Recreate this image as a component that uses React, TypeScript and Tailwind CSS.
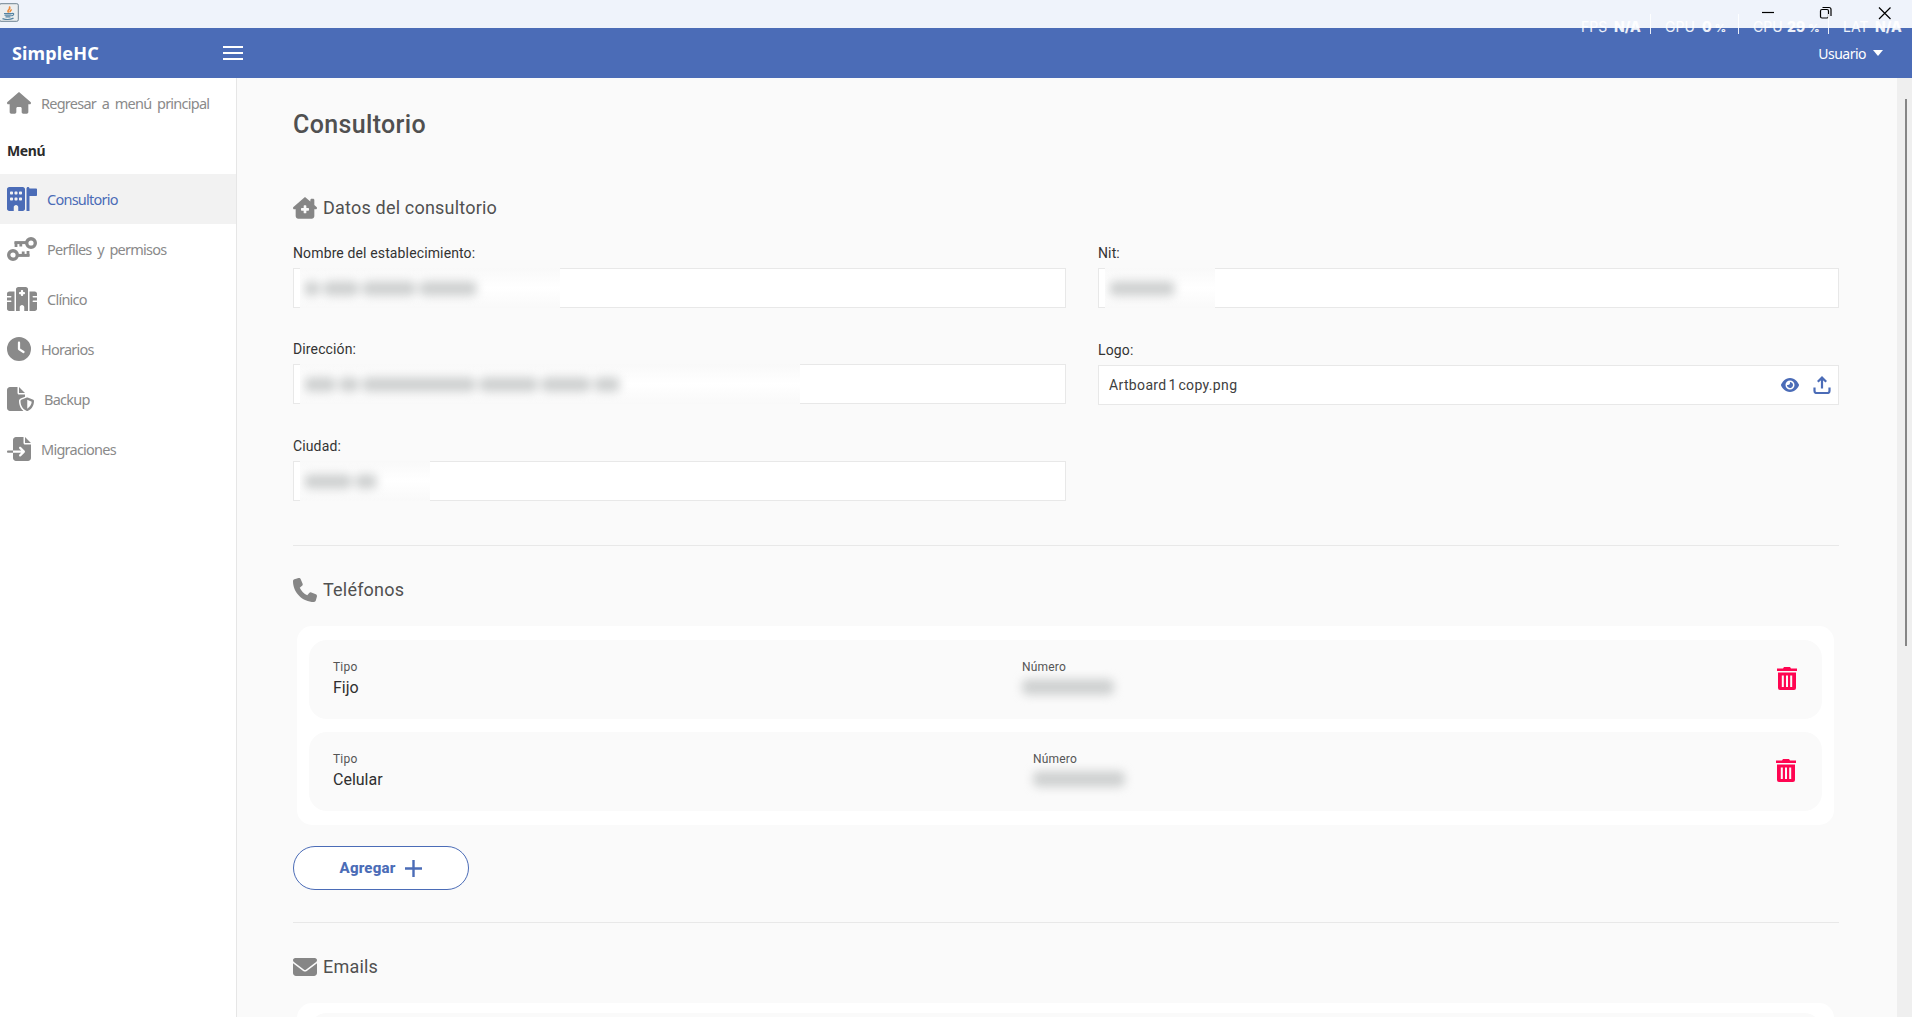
import type { ReactElement, ReactNode } from 'react';
import type { IconType } from 'react-icons';
import {
  FaBuildingFlag,
  FaClock,
  FaEnvelope,
  FaEye,
  FaFileImport,
  FaFileShield,
  FaHospital,
  FaHouse,
  FaHouseChimneyMedical,
  FaPhone,
} from 'react-icons/fa6';

function KeysIcon({ className }: { className?: string }): ReactElement {
  return (
    <svg viewBox="0 0 30 24" className={className} fill="none" stroke="currentColor">
      <circle cx="24" cy="6" r="4.300" strokeWidth="3.400" />
      <path d="M20 5.600H7.500" strokeWidth="3" />
      <path d="M9 5v5M13.800 5v4.500" strokeWidth="2.800" />
      <circle cx="6" cy="18" r="4.300" strokeWidth="3.400" />
      <path d="M10 18.400h12.500" strokeWidth="3" />
      <path d="M21 19v-5M16.200 19v-4.500" strokeWidth="2.800" />
    </svg>
  );
}

type MenuItem = { label: string; icon: IconType | typeof KeysIcon; size: string; active?: boolean };

const menu: MenuItem[] = [
  { label: 'Consultorio', icon: FaBuildingFlag, size: 'w-[30px]', active: true },
  { label: 'Perfiles y permisos', icon: KeysIcon, size: 'w-[30px]' },
  { label: 'Clínico', icon: FaHospital, size: 'w-[30px]' },
  { label: 'Horarios', icon: FaClock, size: 'w-6' },
  { label: 'Backup', icon: FaFileShield, size: 'w-[27px]' },
  { label: 'Migraciones', icon: FaFileImport, size: 'w-6' },
];

const stats = [
  { name: 'FPS', value: 'N/A', unit: '', box: 'w-[70px]', nameBox: 'w-[33px]' },
  { name: 'GPU', value: '0', unit: '%', box: 'w-[88px] pl-[14px]', nameBox: 'w-[37px]' },
  { name: 'CPU', value: '29', unit: '%', box: 'w-[90px] pl-[14px]', nameBox: 'w-[34px]' },
  { name: 'LAT', value: 'N/A', unit: '', box: 'w-[73px] pl-[14px]', nameBox: 'w-8' },
];

function TitleBar(): ReactElement {
  return (
    <div className="relative flex h-7 shrink-0 justify-between bg-[#eff3fb]">
      <svg viewBox="0 0 19 19" className="mt-[3px] h-[19px] w-[19px]" fill="none">
        <rect x="-0.5" y="0.7" width="18.8" height="17.6" rx="1.5" fill="#eceeef" stroke="#6f8391" />
        <path d="M8.800 9.400c-3-2 2.800-3 .5-6M10.300 9.200c-1-1.300 1.200-1.800 1-2.800" stroke="#ed8b3c" strokeWidth="1.6" />
        <path
          d="M4 10.500h8M4.500 12.200h7M5.500 13.800h5M2.500 15.600c3 1 8 1 11-.5M12 10.500c2.500-.5 2 2-.5 2.300"
          stroke="#5382a1"
          strokeWidth="1.2"
        />
      </svg>
      <svg viewBox="0 0 140 26" className="mr-[11px] h-[26px] w-[140px]" fill="none" stroke="#000" strokeWidth="1.2">
        <path d="M1 12.500h12" />
        <rect x="59.500" y="9.500" width="8" height="8.500" rx="1.500" />
        <path d="M61.500 7.500h6.500q2 0 2 2v6.500" />
        <path d="M118 7.500l11.500 11.500M129.500 7.500L118 19" />
      </svg>
      {/* performance counters float over the window edge */}
      <div className="absolute top-[14px] right-[10px] z-10 flex h-5 font-[Inter] text-sm leading-[26px] text-white/90">
        {stats.map((s) => (
          <div key={s.name} className={`flex border-r border-white/90 whitespace-nowrap last:border-r-0 ${s.box}`}>
            <span className={`shrink-0 ${s.nameBox}`}>{s.name}</span>
            <b className="font-extrabold">
              {s.value}
              {s.unit && <span className="ml-[3px] text-[11px]">{s.unit}</span>}
            </b>
          </div>
        ))}
      </div>
    </div>
  );
}

function Header(): ReactElement {
  return (
    <header className="flex h-[50px] shrink-0 items-center bg-[#4b6cb7] text-white">
      <div className="w-[223px] pl-3 font-['Noto_Sans'] text-lg font-bold tracking-[0.15px]">SimpleHC</div>
      <div className="flex h-3.5 w-5 flex-col justify-between">
        <span className="h-0.5 bg-white" />
        <span className="h-0.5 bg-white" />
        <span className="h-0.5 bg-white" />
      </div>
      <div className="mr-[29px] ml-auto flex items-center gap-[7px] font-['Noto_Sans'] text-sm tracking-[-0.5px]">
        <span className="pt-0.5">Usuario</span>
        <svg viewBox="0 0 10 6" className="h-1.5 w-2.5" fill="currentColor">
          <path d="M0 0h10L5 6z" />
        </svg>
      </div>
    </header>
  );
}

function Sidebar(): ReactElement {
  return (
    <nav className="w-[237px] shrink-0 border-r border-[#e6e6e6] bg-white font-['Noto_Sans'] text-[14.5px] tracking-[-0.75px] text-[#8a8a8a] [word-spacing:2.6px]">
      <div className="flex h-[50px] items-center gap-2.5 pl-[7px]">
        <FaHouse className="h-6 w-6" />
        <span className="pt-0.5">Regresar a menú principal</span>
      </div>
      <div className="flex h-[46px] items-center pl-[7px] text-sm font-bold tracking-[-0.4px] text-[#2b2b2b]">Menú</div>
      {menu.map(({ label, icon: Icon, size, active }) => (
        <div
          key={label}
          className={`flex h-[50px] items-center gap-2.5 pl-[7px] ${active ? 'bg-[#f2f2f2] text-[#4b6cb7]' : ''}`}
        >
          <Icon className={`h-6 shrink-0 ${size}`} />
          <span className="pt-0.5">{label}</span>
        </div>
      ))}
    </nav>
  );
}

function SectionTitle({ icon: Icon, children }: { icon: IconType; children: ReactNode }): ReactElement {
  return (
    <h2 className="flex h-6 items-center gap-1.5 text-lg tracking-[0.2px] text-[#505050]">
      <Icon className="h-6 w-6 text-[#868686]" />
      {children}
    </h2>
  );
}

// one blurred blob per hidden word
function Smudge({ words, className }: { words: string[]; className: string }): ReactElement {
  return (
    <div className={`flex items-center gap-[3px] blur-[5px] ${className}`}>
      {words.map((w, i) => (
        <span key={i} className={`h-full rounded-md bg-[#cfd1d1] ${w}`} />
      ))}
    </div>
  );
}

function Field({ label, children }: { label: string; children?: ReactNode }): ReactElement {
  return (
    <div className="flex flex-col gap-[5px]">
      <label className="h-5 text-sm leading-5 tracking-[0.13px] text-[#333]">{label}</label>
      <div className="flex h-10 items-center border border-[#e8e8e8] bg-white">{children}</div>
    </div>
  );
}

function Redacted({ box, words }: { box: string; words: string[] }): ReactElement {
  return (
    <div className={`-my-px ml-1.5 flex h-10 items-center overflow-hidden bg-gradient-to-b from-[#f9f9f9] via-white to-[#f9f9f9] ${box}`}>
      <Smudge className="ml-1 h-[15px]" words={words} />
    </div>
  );
}

function TrashIcon(): ReactElement {
  return (
    <svg viewBox="0 0 20 23" className="h-[23px] w-5" fill="#ff0551">
      <path d="M0 1.500h6L7 0h6l1 1.500h6v2.500H0z" />
      <path
        fillRule="evenodd"
        d="M1 5.500h18V21q0 2-2 2H3q-2 0-2-2zM4.800 8.500v11.500h2V8.500zM9 8.500v11.500h2V8.500zM13.200 8.500v11.500h2V8.500z"
      />
    </svg>
  );
}

const phones = [
  { type: 'Fijo', numberOffset: 'w-[689px]', trash: 'mr-[25px]' },
  { type: 'Celular', numberOffset: 'w-[700px]', trash: 'mr-[26px]' },
];

function PhoneList(): ReactElement {
  return (
    <div className="mr-[5px] ml-1 flex flex-col gap-[13px] rounded-[15px] bg-white px-3 py-3.5">
      {phones.map((p) => (
        <div key={p.type} className="flex h-[79px] items-center rounded-[18px] bg-[#fafafa] pb-0.5 pl-6">
          <div className={`flex h-[42px] flex-col ${p.numberOffset}`}>
            <span className="text-xs leading-[18px] tracking-[0.2px] text-[#555]">Tipo</span>
            <span className="text-base leading-6 text-[#2f2f2f]">{p.type}</span>
          </div>
          <div className="flex h-[42px] flex-col">
            <span className="text-xs leading-[18px] tracking-[0.2px] text-[#555]">Número</span>
            <Smudge className="mt-[3px] h-4" words={['w-[92px]']} />
          </div>
          <div className={`ml-auto ${p.trash}`}>
            <TrashIcon />
          </div>
        </div>
      ))}
    </div>
  );
}

export default function App(): ReactElement {
  return (
    <div className="flex h-[1017px] w-[1912px] flex-col overflow-hidden bg-[#fafafa] font-[Roboto]">
      <TitleBar />
      <Header />
      <div className="flex min-h-0 flex-1">
        <Sidebar />
        <main className="min-w-0 flex-1 overflow-hidden pt-[31px] pr-[58px] pl-14">
          <h1 className="h-8 text-[25px] leading-8 font-medium tracking-[0.35px] text-[#505050]">Consultorio</h1>

          <div className="mt-[55px]">
            <SectionTitle icon={FaHouseChimneyMedical}>Datos del consultorio</SectionTitle>
          </div>
          <div className="mt-[23px] grid grid-cols-[773px_741px] gap-x-8">
            <div className="flex flex-col">
              <Field label="Nombre del establecimiento:">
                <Redacted box="w-[260px]" words={['w-4', 'w-9', 'w-[54px]', 'w-[58px]']} />
              </Field>
              <div className="mt-[31px]">
                <Field label="Dirección:">
                  <Redacted box="w-[500px]" words={['w-8', 'w-5', 'w-[114px]', 'w-[59px]', 'w-[50px]', 'w-[26px]']} />
                </Field>
              </div>
              <div className="mt-8">
                <Field label="Ciudad:">
                  <Redacted box="w-[130px]" words={['w-[48px]', 'w-[22px]']} />
                </Field>
              </div>
            </div>
            <div className="flex flex-col">
              <Field label="Nit:">
                <Redacted box="w-[110px]" words={['w-[66px]']} />
              </Field>
              <div className="mt-8">
                <Field label="Logo:">
                  <span className="pl-2.5 text-sm tracking-[0.35px] text-[#404040] [word-spacing:-2px]">Artboard 1 copy.png</span>
                  <FaEye className="mr-3.5 ml-auto h-4 w-[18px] text-[#4b6cb7]" />
                  <svg viewBox="0 0 18 18" className="mr-[7px] h-[18px] w-[18px]" fill="none" stroke="#4b6cb7" strokeWidth="2.2">
                    <path d="M9 12.500V2M4.800 5.800L9 1.600l4.200 4.200M1.500 11.500v3.500q0 2 2 2h11q2 0 2-2v-3.500" />
                  </svg>
                </Field>
              </div>
            </div>
          </div>

          <hr className="mt-11 border-[#e8e8e8]" />
          <div className="mt-8">
            <SectionTitle icon={FaPhone}>Teléfonos</SectionTitle>
          </div>
          <div className="mt-6">
            <PhoneList />
          </div>
          <button
            type="button"
            className="mt-[21px] flex h-11 w-44 items-center justify-center gap-2.5 rounded-full border border-[#4b6cb7] bg-white text-[15px] font-extrabold tracking-[0.2px] text-[#4b6cb7]"
          >
            Agregar
            <svg viewBox="0 0 17 17" className="h-[17px] w-[17px]" stroke="currentColor" strokeWidth="2.4">
              <path d="M8.500 0v17M0 8.500h17" />
            </svg>
          </button>

          <hr className="mt-8 border-[#e8e8e8]" />
          <div className="mt-8">
            <SectionTitle icon={FaEnvelope}>Emails</SectionTitle>
          </div>
          <div className="mt-6 mr-[5px] ml-1 h-40 rounded-[15px] bg-white px-3 pt-2.5">
            <div className="h-20 rounded-[18px] bg-[#fafafa]" />
          </div>
        </main>
        <div className="w-[15px] shrink-0 bg-[#efefef] pt-[21px] pl-2">
          <div className="h-[547px] w-0.5 bg-[#868686]" />
        </div>
      </div>
    </div>
  );
}
